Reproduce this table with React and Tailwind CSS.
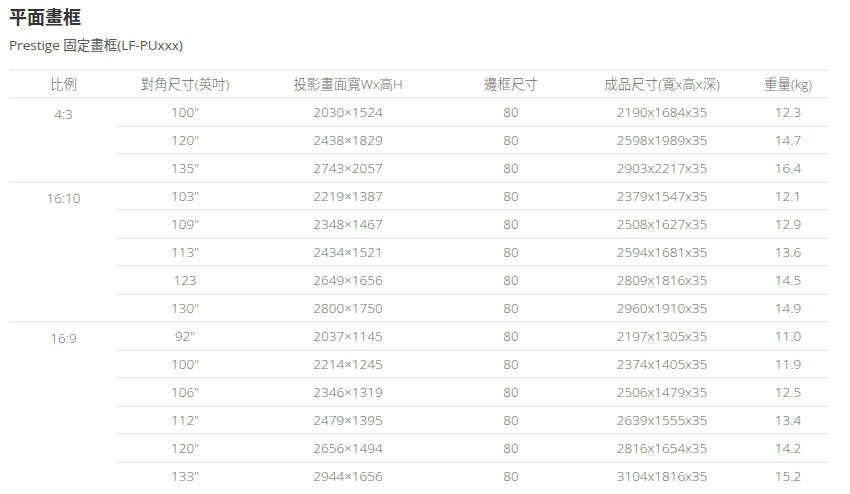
import React from 'react';

const groups = [
  {
    ratio: '4:3',
    rows: [
      ['100"', '2030×1524', '80', '2190x1684x35', '12.3'],
      ['120"', '2438×1829', '80', '2598x1989x35', '14.7'],
      ['135"', '2743×2057', '80', '2903x2217x35', '16.4'],
    ],
  },
  {
    ratio: '16:10',
    rows: [
      ['103"', '2219×1387', '80', '2379x1547x35', '12.1'],
      ['109"', '2348×1467', '80', '2508x1627x35', '12.9'],
      ['113"', '2434×1521', '80', '2594x1681x35', '13.6'],
      ['123', '2649×1656', '80', '2809x1816x35', '14.5'],
      ['130"', '2800×1750', '80', '2960x1910x35', '14.9'],
    ],
  },
  {
    ratio: '16:9',
    rows: [
      ['92"', '2037×1145', '80', '2197x1305x35', '11.0'],
      ['100"', '2214×1245', '80', '2374x1405x35', '11.9'],
      ['106"', '2346×1319', '80', '2506x1479x35', '12.5'],
      ['112"', '2479×1395', '80', '2639x1555x35', '13.4'],
      ['120"', '2656×1494', '80', '2816x1654x35', '14.2'],
      ['133"', '2944×1656', '80', '3104x1816x35', '15.2'],
    ],
  },
];

const headers = ['比例', '對角尺寸(英吋)', '投影畫面寬Wx高H', '邊框尺寸', '成品尺寸(寬x高x深)', '重量(kg)'];
const widths = ['w-[109px]', 'w-[134px]', 'w-[192px]', 'w-[134px]', 'w-[168px]', 'w-[84px]'];

const App = () => {
  return (
    <div className="w-[850px] h-[494px] overflow-hidden bg-white px-[9px] pt-[4px] text-[#6a6a6a] font-['Open_Sans','Noto_Sans_CJK_TC',sans-serif]">
      <h1 className="text-[18px] font-bold leading-[26px] text-[#333]">平面畫框</h1>
      <p className="mt-[6px] text-[13.5px] leading-[18px] text-[#555]">Prestige 固定畫框(LF-PUxxx)</p>

      {/* spec table */}
      <table className="mt-[15px] w-[821px] border-collapse table-fixed text-[13.5px] font-light">
        <colgroup>
          {widths.map((w, i) => (
            <col key={i} className={w} />
          ))}
        </colgroup>
        <thead>
          <tr className="h-[28px] border-t-2 border-[#f0f0f0]">
            {headers.map((h) => (
              <th key={h} className="font-light text-center p-0">{h}</th>
            ))}
          </tr>
        </thead>
        <tbody>
          {groups.map((g) =>
            g.rows.map((r, i) => (
              <tr key={g.ratio + i} className="h-[28px]">
                {i === 0 && (
                  <td rowSpan={g.rows.length} className="align-top text-center pt-[5px] border-t-2 border-[#eeeeee]">
                    {g.ratio}
                  </td>
                )}
                {r.map((c, j) => (
                  <td key={j} className="text-center p-0 border-t-2 border-[#eeeeee]">{c}</td>
                ))}
              </tr>
            ))
          )}
        </tbody>
      </table>
    </div>
  );
};

export default App;
